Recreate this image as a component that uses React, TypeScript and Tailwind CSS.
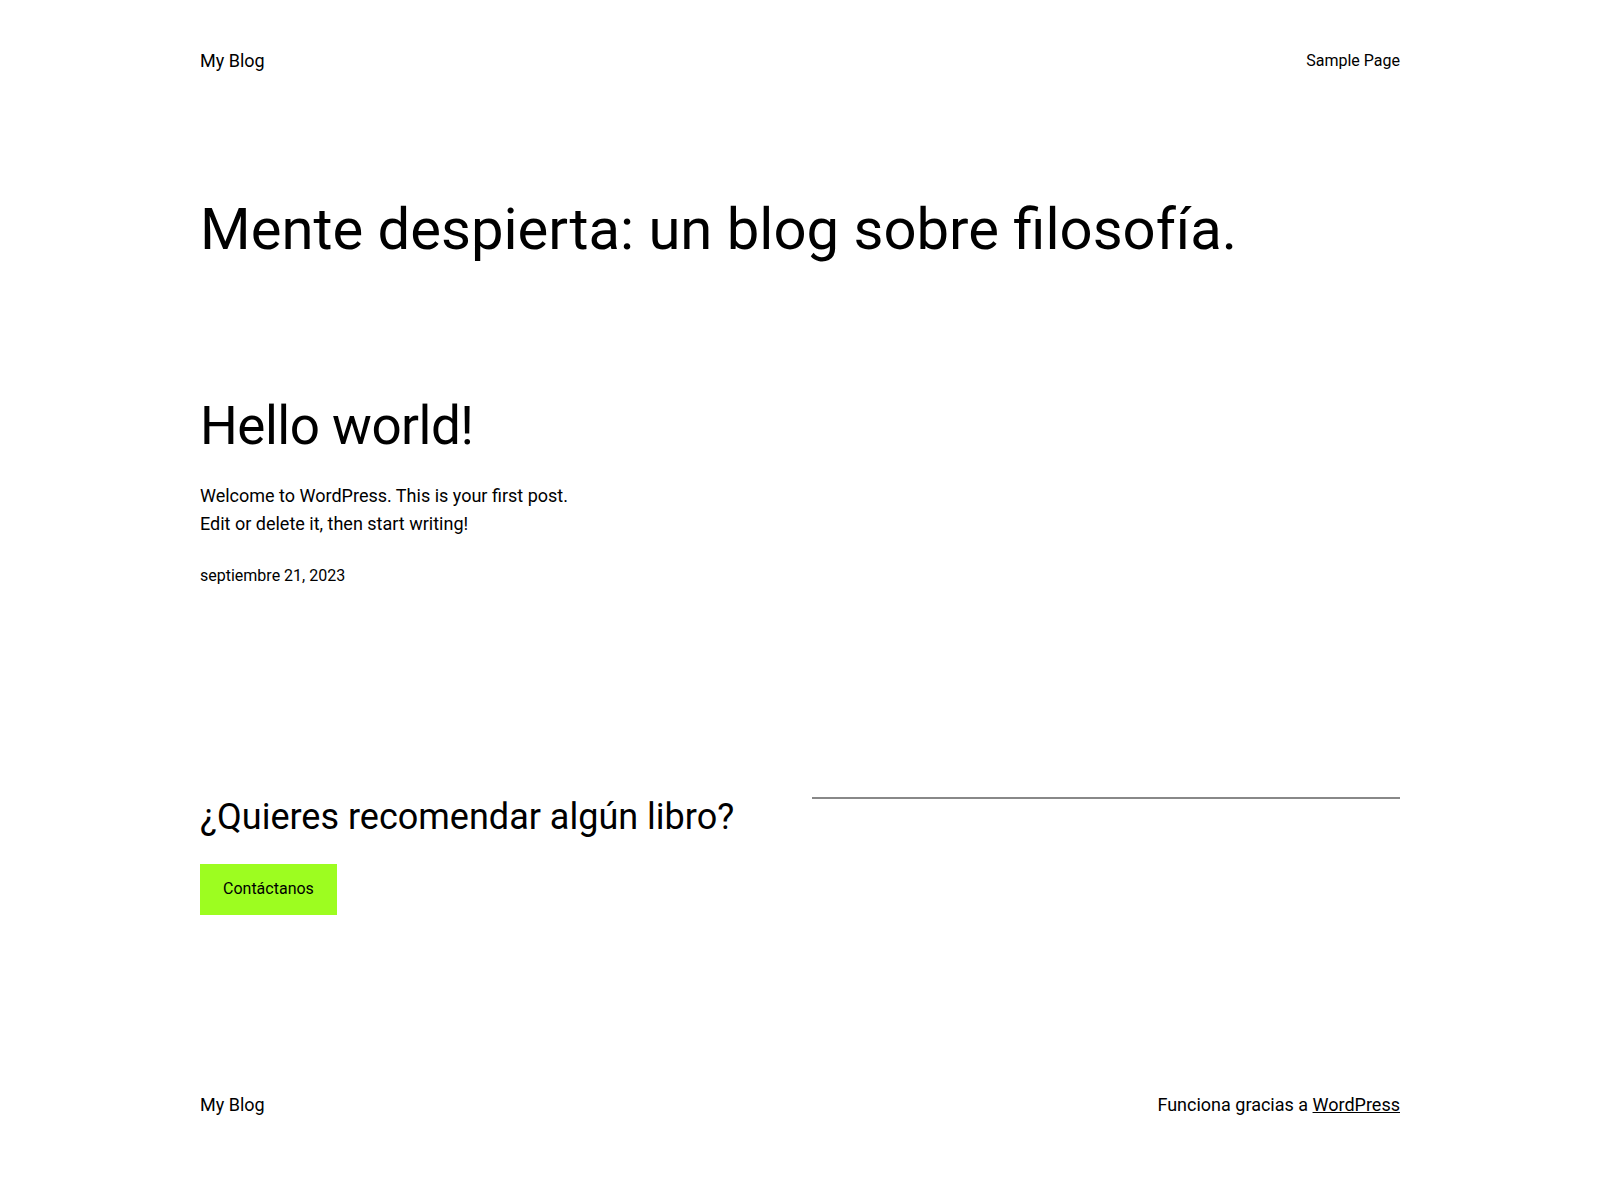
import React from 'react';

const Header: React.FC = () => (
  <header className="flex h-[122px] items-center justify-between">
    <a className="text-[18px] leading-none">My Blog</a>
    <nav className="text-[16px] leading-none">Sample Page</nav>
  </header>
);

const Post: React.FC = () => (
  <article className="mt-[128px]">
    <h2 className="text-[53px] leading-[66px] font-normal tracking-[-0.5px]">Hello world!</h2>
    <p className="mt-[23px] text-[18px] leading-[28px]">
      Welcome to WordPress. This is your first post.
      <br />
      Edit or delete it, then start writing!
    </p>
    <div className="mt-[26px] text-[16px] leading-[24px]">septiembre 21, 2023</div>
  </article>
);

const CallToAction: React.FC = () => (
  <section className="mt-[208px] grid grid-cols-2 gap-6">
    <div>
      <h3 className="text-[36px] leading-[1.2]">¿Quieres recomendar algún libro?</h3>
      <button className="mt-[25px] h-[51px] bg-[#9dfd20] px-[23px] text-[16px] text-black">
        Contáctanos
      </button>
    </div>
    <div className="pt-[1px]">
      <hr className="border-0 border-t-2 border-[#888888]" />
    </div>
  </section>
);

const Footer: React.FC = () => (
  <footer className="mt-[160px] flex h-[60px] items-center justify-between">
    <a className="text-[18px] leading-none">My Blog</a>
    <p className="text-[18px] leading-none">
      Funciona gracias a <a className="underline">WordPress</a>
    </p>
  </footer>
);

export default function App() {
  return (
    <div className="min-h-screen bg-white text-black font-['Roboto',_'Liberation_Sans',_sans-serif]">
      <div className="mx-auto w-[1200px]">
        <Header />
        <h1 className="mt-[73px] text-[58px] leading-[1.2] font-normal">
          Mente despierta: un blog sobre filosofía.
        </h1>
        <Post />
        <CallToAction />
        <Footer />
      </div>
    </div>
  );
}
